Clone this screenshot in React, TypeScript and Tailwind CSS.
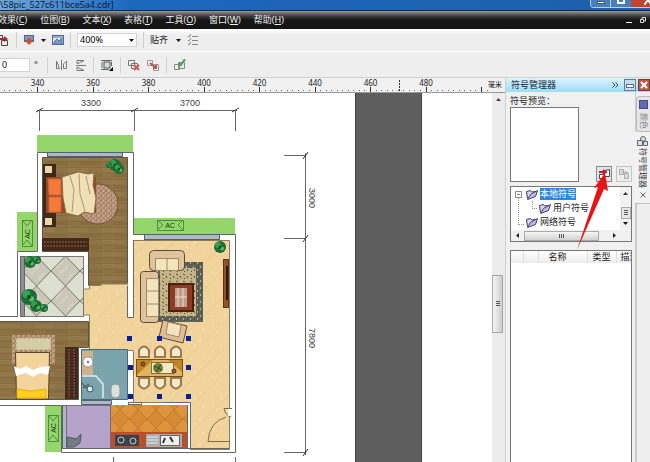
import React from 'react';

const MENUS = [
  ['效果', 'C'],
  ['位图', 'B'],
  ['文本', 'X'],
  ['表格', 'T'],
  ['工具', 'O'],
  ['窗口', 'W'],
  ['帮助', 'H'],
];

const RULER_LABELS = [340, 360, 380, 400, 420, 440, 460, 480];
const RULER_START = 37;
const RULER_STEP = 55.5;

const Separator = () => <span className="h-4 w-px shrink-0 bg-[#cfcfcf]" />;

const Caret = () => (
  <svg width="5" height="3" className="block shrink-0">
    <path d="M0 0H5L2.5 3Z" fill="#111" />
  </svg>
);

const IconButton = ({
  label,
  children,
}: {
  label: string;
  children: React.ReactNode;
}) => (
  <button type="button" aria-label={label} className="shrink-0">
    <svg width="12" height="12" fill="none" className="block">
      {children}
    </svg>
  </button>
);

const TitleBar = () => (
  <header className="flex h-[11px] shrink-0 items-start justify-between border-b border-[#12294a] bg-linear-to-r from-[#6fa6da] via-[#1a68bf] via-20% to-[#1f5fa8]">
    <h1 className="whitespace-nowrap font-['Open_Sans',sans-serif] text-[9px] leading-[10px] text-[#08172b]">
      \58pic_527c611bce5a4.cdr]
    </h1>
    <div className="flex h-2 overflow-hidden rounded-bl-sm border-b border-l border-[#b9d2ea]">
      <button
        type="button"
        aria-label="最小化"
        className="flex w-5 justify-center border-r border-[#b9d2ea] bg-[#4a7eb6]"
      >
        <span className="mt-px h-[3px] w-2 border border-[#47586b] bg-white" />
      </button>
      <button
        type="button"
        aria-label="还原"
        className="flex w-5 justify-center bg-[#4a7eb6]"
      >
        <span className="h-1 w-2 border-2 border-t-0 border-white" />
      </button>
      <button
        type="button"
        aria-label="关闭"
        className="flex w-[19px] justify-end bg-[#c14430]"
      >
        <svg width="6" height="5">
          <path d="M0 5L4 0M4 0L7 4" stroke="#fff" strokeWidth="2" />
        </svg>
      </button>
    </div>
  </header>
);

const MenuBar = () => (
  <nav className="flex h-[18px] shrink-0 items-center justify-between bg-linear-to-b from-[#9a9a9a] via-[#3a3a3a] via-30% to-[#151515] to-50%">
    <div className="-ml-[2px] flex gap-[13px]">
      {MENUS.map(([name, key]) => (
        <button
          key={key}
          type="button"
          className="whitespace-nowrap text-[9px] leading-3 text-[#f0f0f0]"
        >
          {name}(<u>{key}</u>)
        </button>
      ))}
    </div>
    <div className="flex items-center gap-2 pr-1">
      <button type="button" aria-label="最小化文档">
        <span className="mt-1 block h-px w-[6px] bg-white" />
      </button>
      <button type="button" aria-label="还原文档">
        <svg width="6" height="6" fill="none" className="block">
          <path d="M2 2V.5H5.5V4H4M.5 2.5H3.5V5.5H.5Z" stroke="#ddd" />
        </svg>
      </button>
    </div>
  </nav>
);

const StandardBar = () => (
  <div className="flex h-[23px] shrink-0 items-center gap-[6px] border-b border-white bg-linear-to-b from-white to-[#eee] to-30%">
    <div className="-ml-[2px]">
      <IconButton label="导出">
        <path d="M.5 1.5H4.5V5.5H.5M3.5 6.5H9.5V11.5H3.5Z" stroke="#444" />
        <path d="M0 4H6V2L10 5L6 8V6H0Z" fill="#b3202c" />
      </IconButton>
    </div>
    <Separator />
    <IconButton label="应用程序启动器">
      <rect x="1" y="1" width="10" height="7" fill="#47689c" />
      <rect x="2" y="2" width="8" height="4" fill="#7d9ac2" />
      <path d="M4 4H8V7H10L6 11L2 7H4Z" fill="#d65232" />
    </IconButton>
    <Caret />
    <IconButton label="欢迎屏幕">
      <rect x=".5" y="1.5" width="11" height="9" fill="#dbe4f1" stroke="#5a6680" />
      <path d="M1 3H11M2 8L5 5L7 7L10 4V10H2Z" stroke="#4e74b4" fill="#7a9bcc" />
    </IconButton>
    <Separator />
    <div className="relative flex h-[14px] w-[60px]">
      <select
        aria-label="缩放级别"
        defaultValue="400%"
        className="w-full appearance-none border border-[#d2d2d2] bg-white pl-[2px] text-[9px] leading-3 text-black"
      >
        <option>400%</option>
      </select>
      <span className="pointer-events-none absolute right-[3px] top-[6px]">
        <Caret />
      </span>
    </div>
    <Separator />
    <button type="button" className="flex items-center gap-2 text-[9px] leading-3">
      贴齐
      <Caret />
    </button>
    <IconButton label="选项">
      <path d="M5 2.5H11M5 6.5H11M5 10.5H11" stroke="#858585" />
      <path d="M1 2L2 3L4 0M1 6L2 7L4 4M1 10L2 11L4 8" stroke="#6c9278" />
    </IconButton>
  </div>
);

const PropertyBar = () => (
  <div className="flex h-[26px] shrink-0 items-center gap-[7px] border-b border-[#d0d0d0] bg-[#eee]">
    <label className="flex items-center gap-1 text-[9px] leading-3">
      <input
        aria-label="旋转角度"
        defaultValue="0"
        className="h-[14px] w-[30px] border border-l-0 border-[#d2d2d2] bg-white pl-[2px]"
      />
      <span className="w-[6px]">°</span>
    </label>
    <Separator />
    <IconButton label="水平镜像">
      <path d="M1.5 2V9.5H4.5ZM6.5 1V11M11.5 2V9.5H8.5V5Z" stroke="#777" />
    </IconButton>
    <IconButton label="垂直镜像">
      <path d="M3 1.5H10L4 4.5H3ZM2 6.5H12M3 11.5H10L4 8.5H3Z" stroke="#777" />
    </IconButton>
    <Separator />
    <IconButton label="文本换行">
      <rect x="3" y="3" width="6" height="6" fill="#d5dae4" stroke="#555" />
      <path d="M0 1.5H11M0 10.5H8M0 4H2M0 6H2M0 8H2M10.5 3V7" stroke="#666" />
      <path d="M12 8V12H8Z" fill="#000" />
    </IconButton>
    <Separator />
    <div className="flex gap-[7px]">
      <IconButton label="编辑符号">
        <path d="M.5 1.5H6.5V6.5H.5ZM3.5 4.5H9.5V9.5H3.5Z" stroke="#777" />
        <path d="M6 6L11 11M11 6L6 11" stroke="#cf5350" strokeWidth="2" />
      </IconButton>
      <IconButton label="断开链接">
        <path d="M.5 1.5H5.5V6.5H.5ZM6.5 5.5H11.5V11.5H6.5Z" stroke="#999" />
        <path d="M3 4L9 9M9 6V9H6" stroke="#bd5552" strokeWidth="2" />
      </IconButton>
    </div>
    <Separator />
    <IconButton label="还原为对象">
      <path d="M.5 5.5H5.5V10.5H.5ZM4.5 3.5H10.5V9.5H4.5Z" stroke="#888" />
      <path d="M5 4L7 6L11 0" stroke="#3da84a" strokeWidth="2" />
    </IconButton>
  </div>
);

const Ruler = () => (
  <div className="flex h-[15px] shrink-0 border-b border-[#999] bg-[#f1f1f1]">
    <svg className="h-full w-full" aria-label="标尺">
      {Array.from({ length: 88 }, (_, i) => {
        const x = Math.round(RULER_START + (i - 6) * (RULER_STEP / 10)) + 0.5;
        const major = (i - 6) % 10 === 0;
        return (
          <path
            key={i}
            d={`M${x} ${major ? 9 : 12}V${major ? 14 : 13}`}
            stroke={major ? '#333' : '#666'}
          />
        );
      })}
      {RULER_LABELS.map((n, i) => (
        <text
          key={n}
          x={RULER_START + 0.5 + i * RULER_STEP}
          y="8"
          textAnchor="middle"
          fontSize="8"
          fill="#222"
        >
          {n}
        </text>
      ))}
      <path d="M399.5 2V14" stroke="#333" strokeDasharray="2 1" />
      <text x="488" y="9" fontSize="7" fill="#111">
        毫米
      </text>
    </svg>
  </div>
);

const Plant = ({ x, y, r }: { x: number; y: number; r: number }) => (
  <g>
    <circle cx={x} cy={y} r={r} fill="#1e6b35" />
    <circle cx={x - r / 3} cy={y - r / 3} r={r / 2} fill="#35a04f" />
    <circle cx={x + r / 3} cy={y + r / 4} r={r / 3} fill="#57b964" />
    <circle cx={x} cy={y} r={r / 4} fill="#0d4824" />
  </g>
);

const Dimensions = () => (
  <g stroke="#666" fill="none">
    <path d="M37 110.5H237M39.5 110V131M134.5 110V131M235.5 110V131" />
    <path d="M36 112L43 108M131 112L138 108M232 112L239 108" stroke="#333" />
    <path d="M305.5 153V455M284 155.5H306M284 238.5H306M284 452.5H306" />
    <path d="M303 159L308 152M303 242L308 235M303 456L308 449" stroke="#333" />
    <path d="M113.5 457V480M235.5 457V480" />
    <g
      stroke="none"
      fill="#444"
      fontSize="9"
      textAnchor="middle"
      fontFamily="Liberation Sans, sans-serif"
    >
      <text x="91" y="106">3300</text>
      <text x="190" y="106">3700</text>
      <text transform="translate(309 198) rotate(90)">3000</text>
      <text transform="translate(309 338) rotate(90)">7800</text>
    </g>
  </g>
);

const Balconies = () => (
  <g>
    <g fill="#94d56c">
      <rect x="37" y="135" width="96" height="17" />
      <rect x="133" y="218" width="102" height="16" />
      <rect x="17" y="212" width="20" height="39" />
      <rect x="45" y="405" width="16" height="47" />
    </g>
    <g fill="none" stroke="#4d8f3c">
      <path d="M157.5 220.5H183.5V230.5H157.5ZM157 220L163 225L157 230M183 220L178 225L183 230" />
      <path d="M22.5 220.5H32.5V246.5H22.5ZM22 220L27 226L32 220M22 246L27 240L32 246" />
      <path d="M48.5 415.5H58.5V441.5H48.5ZM48 415L53 421L58 415M48 441L53 435L58 441" />
    </g>
    <g
      fill="#163c12"
      fontSize="7"
      textAnchor="middle"
      fontFamily="Liberation Sans, sans-serif"
    >
      <text x="170" y="228">AC</text>
      <text transform="translate(30 234) rotate(-90)">AC</text>
      <text transform="translate(56 428) rotate(-90)">AC</text>
    </g>
  </g>
);

const Rooms = () => (
  <g>
    {/* outer walls */}
    <path
      d="M37.5 152.5H133.5V234.5H235.5V452.5H61.5V405.5H-2V316.5H17.5V251.5H37.5Z"
      fill="#fff"
      stroke="#666"
    />
    {/* bedroom, hall and living room floors */}
    <path d="M42.5 157.5H127.5V285.5H88.5V251.5H42.5Z" fill="url(#wood)" stroke="#5d5442" />
    <path
      d="M89.5 285.5H101V284H127.5V316.5H133.5V240.5H229.5V449.5H190.5V402.5H133.5V350.5H89.5V315H83.5V289H89.5Z"
      fill="url(#sand)"
      stroke="#8d7c5c"
    />
    <path d="M127.5 286V317.5H133.5V240" fill="#fff" stroke="#666" />
    <path d="M-2 321.5H88.5V347.5H78.5V399.5H-2Z" fill="url(#wood)" stroke="#5d5442" />
    <rect x="24.5" y="256.5" width="59" height="60" fill="url(#tile)" stroke="#777" />
    <rect x="20.5" y="256.5" width="4" height="60" fill="#8b8f97" stroke="#666" />
    <path d="M81.5 349.5H127.5V399.5H81.5Z" fill="#7ba3ad" stroke="#4d6a73" />
    {/* windows */}
    <g fill="#a9b9c8" stroke="#56616e">
      <rect x="47.5" y="152.5" width="75" height="4" />
      <rect x="144.5" y="234.5" width="75" height="5" />
      <rect x="62.5" y="405.5" width="4" height="43" />
      <path d="M81.5 400.5H111.5V404.5H81.5Z" />
    </g>
    <rect x="66.5" y="405.5" width="44" height="43" fill="#b5a3ca" stroke="#776b88" />
    {/* kitchen */}
    <rect x="111" y="405" width="76" height="28" fill="url(#kitchen)" />
    <path d="M111 432H187V449H111Z" fill="#b8502c" />
    <path d="M128.5 405V402.5H141.5V404.5H128M163 402.5H190.5V449M187.5 405V449" stroke="#666" fill="none" />
    <path d="M61 448.5H229" stroke="#666" />
    {/* entrance door */}
    <path d="M229 441.5H208Q209 422 226 417M232 408.5H224Q225 415 231 417" fill="none" stroke="#7c6c50" />
    <path d="M228 409H233V416H228Z" fill="#fff" />
  </g>
);

const BedroomFurniture = () => (
  <g>
    <rect x="42" y="238" width="47" height="13" fill="#44291a" />
    <path d="M44 242H87M44 246H87" stroke="#694430" strokeWidth="2" strokeDasharray="2 1" />
    <circle cx="98" cy="204" r="20" fill="url(#weave)" stroke="#764e40" />
    <rect x="43" y="164" width="13" height="63" fill="#3f281c" />
    <rect x="45" y="166" width="7" height="7" fill="#e9d7ac" />
    <rect x="45" y="218" width="7" height="7" fill="#e9d7ac" />
    <rect x="46" y="177" width="50" height="36" fill="#8b4d2b" />
    <path d="M48 179H61V195H49ZM49 197H61V212H49Z" fill="#f47a3b" stroke="#d9622e" />
    <path
      d="M62 177L72 174L78 172L88 174L94 173L93 185L96 198L94 214L84 212L78 216L66 213L63 198Z"
      fill="#efe0b8"
      stroke="#89704b"
    />
    <path d="M70 176L74 190L72 212M79 174L80 194L85 211M86 176L90 194" fill="none" stroke="#ad966d" />
    <Plant x={115} y={165} r={6} />
    <Plant x={119} y={169} r={5} />
    <Plant x={109} y={165} r={3} />
    <Plant x={30} y={262} r={6} />
    <Plant x={37} y={260} r={4} />
    <Plant x={29} y={297} r={8} />
    <Plant x={36} y={306} r={6} />
    <Plant x={44} y={308} r={4} />

    {/* second bedroom */}
    <rect x="12" y="335" width="43" height="29" fill="url(#weave)" />
    <rect x="16" y="338" width="35" height="12" fill="#d6cda6" stroke="#a8946c" strokeDasharray="2 2" />
    <path d="M15.500 352.500H49.500L48.500 399H16.500Z" fill="#f1d59c" stroke="#564632" />
    <path d="M14 366L20 369L26 366L33 370L40 367L50 366L48 375L40 373L33 377L26 373L16 376Z" fill="#fff" />
    <path d="M17 389L31 391L46 389V398H17Z" fill="#fed21c" stroke="#f0a816" />
    <rect x="65" y="347" width="13" height="52" fill="#442a1e" />
    <path d="M69 349V398M74 349V398" stroke="#694430" strokeWidth="2" strokeDasharray="2 1" />

    {/* bathroom */}
    <rect x="82" y="351" width="11" height="24" fill="#d0b28a" />
    <circle cx="88" cy="362" r="5" fill="#fff" stroke="#999" />
    <circle cx="88" cy="362" r="1" fill="#444" />
    <path d="M82 376H96L103 384V398" fill="none" stroke="#c7dadd" strokeWidth="2" />
    <path d="M82 383L90 392M83 388L89 384" stroke="#31454c" />
    <circle cx="90" cy="389" r="3" fill="#e1eaeb" stroke="#3c535a" />
    <rect x="111" y="384" width="9" height="14" rx="4" fill="#dde0dc" stroke="#8a9494" />
    <path d="M67 437L76 439L81 434L80 443L74 447H67Z" fill="#747c84" stroke="#4f575f" />
  </g>
);

const LivingFurniture = () => (
  <g>
    <rect x="158" y="262" width="45" height="60" fill="#5d625b" />
    <rect x="158" y="262" width="45" height="60" fill="url(#speckle)" />
    <rect x="160" y="268" width="36" height="48" fill="#c7b588" />
    <rect x="160" y="268" width="36" height="48" fill="url(#speckle)" />
    <rect x="149.500" y="250.500" width="35" height="20" rx="4" fill="#dfc39c" stroke="#5d4a39" />
    <path d="M155.500 258.500H178.500V270.500H155.500ZM167 258V270" fill="#f4e4be" stroke="#a48761" />
    <rect x="140.500" y="271.500" width="18" height="51" rx="3" fill="#dfc39c" stroke="#5d4a39" />
    <path d="M146.500 278.500H158.500V316.500H146.500ZM146 291H158M146 304H158" fill="#f4e4be" stroke="#a48761" />
    <rect x="169" y="284" width="24" height="27" fill="#8b3c22" stroke="#4a2013" strokeWidth="2" />
    <rect x="175" y="288" width="12" height="19" fill="#c09b8a" />
    <path d="M178 288V307M183 288V307M175 297H187" stroke="#ebd9cd" />
    <path d="M163 320L187 326L183 343L159 337Z" fill="#dfbd97" stroke="#5d4a39" />
    <path d="M168 322L181 325L179 337L166 334Z" fill="#f4e4be" stroke="#a48761" />
    <rect x="223.500" y="259.500" width="5" height="48" fill="#95512a" stroke="#5f3219" />
    <path d="M227 266V300" stroke="#27170f" strokeWidth="2" />
    <Plant x={220} y={247} r={6} />

    {/* dining set */}
    {[144, 160, 176].map((x) => (
      <g key={x} fill="#f4e8cd" stroke="#9a7a48" strokeWidth="2">
        <path d={`M${x - 5} 357V350Q${x} 343 ${x + 5} 350V357Z`} />
        <path d={`M${x - 5} 378V385Q${x} 392 ${x + 5} 385V378Z`} />
      </g>
    ))}
    <rect x="136.500" y="359.500" width="46" height="17" fill="#bf8426" stroke="#785016" />
    <path d="M137 375L153 360H168L182 372V376H137Z" fill="#e2b461" />
    <rect x="151.500" y="362.500" width="22" height="11" fill="#f4e9c5" stroke="#8a6d35" />
    <circle cx="158" cy="368" r="5" fill="#6e8736" />
    <path d="M154 366L162 370M161 364L156 372" stroke="#313f18" />
    <circle cx="143" cy="364" r="2" fill="#8d5d39" stroke="#543018" />
    <circle cx="174" cy="371" r="2" fill="#8d5d39" stroke="#543018" />

    {/* stove and sink */}
    <rect x="115" y="435" width="24" height="11" fill="#3c4249" />
    <circle cx="121" cy="440" r="3" fill="none" stroke="#c5cacf" />
    <circle cx="133" cy="441" r="3" fill="none" stroke="#c5cacf" />
    <rect x="146" y="434" width="36" height="13" fill="#a9adb0" />
    <path d="M147 437H158M147 440H158M147 443H158" stroke="#eee" />
    <rect x="160.500" y="435.500" width="19" height="10" fill="#eee" stroke="#666" />
    <path d="M163 443L165 438M170 437L173 442" stroke="#333" strokeWidth="2" />
  </g>
);

const HANDLES = [
  [129, 338], [159, 338], [188, 338],
  [130, 367], [188, 367],
  [130, 396], [159, 396], [188, 396],
];

const FloorPlan = () => (
  <svg className="absolute inset-0 h-full w-full" aria-label="户型图">
    <defs>
      <pattern id="wood" width="34" height="12" patternUnits="userSpaceOnUse">
        <rect width="34" height="12" fill="#8d7345" />
        <rect width="20" height="4" fill="#947a4b" />
        <rect x="12" y="6" width="22" height="3" fill="#866c3e" />
        <path d="M0 5.500H34M0 11.500H34" stroke="#7f663b" strokeWidth=".5" />
      </pattern>
      <pattern id="sand" width="26" height="26" patternUnits="userSpaceOnUse">
        <rect width="26" height="26" fill="#f1d49b" />
        <path d="M0 26L26 0" stroke="#e6c88b" strokeWidth=".7" />
        <path d="M3 4h2M12 8h2M20 17h3M8 20h2M17 3h2M4 13h2" stroke="#f5dca9" strokeWidth="2" />
      </pattern>
      <pattern id="tile" width="29" height="30" x="22" y="256" patternUnits="userSpaceOnUse">
        <rect width="29" height="30" fill="#dde0d0" />
        <path d="M14.500 0L29 15L14.500 30L0 15Z" fill="#cbc8b7" stroke="#777c73" />
        <path d="M5 12L12 5M16 24L22 17M9 18L17 10" stroke="#d5d2c3" strokeWidth="2" />
      </pattern>
      <pattern id="kitchen" width="18" height="18" x="111" y="410" patternUnits="userSpaceOnUse">
        <rect width="18" height="18" fill="#de943c" />
        <path d="M9 0L18 9L9 18L0 9Z" fill="#d68a35" stroke="#c47a2c" />
      </pattern>
      <pattern id="weave" width="5" height="5" patternUnits="userSpaceOnUse">
        <rect width="5" height="5" fill="#b99879" />
        <path d="M0 1h2M3 3h2M1 4h1" stroke="#94685a" />
        <path d="M3 1h1M0 3h1" stroke="#dcc4a4" />
      </pattern>
      <pattern id="speckle" width="7" height="7" patternUnits="userSpaceOnUse">
        <path d="M1 1L3 2M5 3L6 5M2 5L3 6" stroke="#494d42" />
        <path d="M4 1h1M1 4h1" stroke="#bdb08c" strokeWidth="2" />
      </pattern>
    </defs>
    <rect x="355" width="66" height="100%" fill="#5e5e5e" />
    <path d="M355.500 0V2000M421.500 0V2000" stroke="#444" />
    <g transform="translate(0 -93)">
      <Dimensions />
      <Balconies />
      <Rooms />
      <BedroomFurniture />
      <LivingFurniture />
      {HANDLES.map(([x, y]) => (
        <rect key={`${x}-${y}`} x={x - 2} y={y - 2} width="5" height="5" fill="#0b1d99" />
      ))}
    </g>
  </svg>
);

const CanvasScrollbar = () => (
  <div className="flex w-[13px] shrink-0 flex-col bg-[#ececec]">
    <button
      type="button"
      aria-label="向上滚动"
      className="flex h-3 items-center justify-center"
    >
      <svg width="5" height="3">
        <path d="M0 3L2.500 0L5 3Z" fill="#444" />
      </svg>
    </button>
    <div className="mt-[170px] flex h-[58px] w-[11px] items-center justify-center border border-[#a5a5a5] bg-linear-to-r from-[#f6f6f6] to-[#cecece]">
      <svg width="4" height="6">
        <path d="M0 .5H4M0 2.500H4M0 4.500H4" stroke="#555" />
      </svg>
    </div>
  </div>
);

const Folder = () => (
  <svg width="12" height="11" className="shrink-0" stroke="#403c72">
    <path d="M1.500 9.500L.5 2.500L4.500 1.500L5.500 3L9.500 2.500V5" fill="#d9d8f3" />
    <path d="M1.500 10.500L4.500 5.500L11.500 1.500L9.500 7.500Z" fill="#c0bee8" />
  </svg>
);

const SymbolTree = () => (
  <div className="flex h-[56px] flex-col border border-[#777] bg-white">
    <div className="flex min-h-0 flex-1">
      <ul className="flex-1 text-[9px] leading-[14px]">
        <li>
          <div className="flex h-[14px] items-center gap-[2px] pl-1">
            <button type="button" aria-label="折叠" className="mr-[2px]">
              <svg width="7" height="7" fill="#fff" className="block">
                <path d="M.5.5H6.500V6.500H.5ZM2 3.500H5" stroke="#888" />
              </svg>
            </button>
            <Folder />
            <span className="bg-[#2f88dc] leading-3 text-white">本地符号</span>
          </div>
          <ul className="ml-[21px]">
            <li className="flex h-[14px] items-center gap-[2px]">
              <span className="mb-[6px] h-2 w-[5px] border-b border-l border-dotted border-[#999]" />
              <Folder />
              用户符号
            </li>
          </ul>
        </li>
        <li className="flex h-[14px] items-center gap-[2px] pl-[7px]">
          <span className="-mt-[22px] h-7 w-[6px] border-b border-l border-dotted border-[#999]" />
          <Folder />
          网络符号
        </li>
      </ul>
      <div className="flex w-[11px] flex-col items-center justify-between bg-[#f2f2f2] py-[5px]">
        <svg width="5" height="3">
          <path d="M0 3L2.500 0L5 3Z" fill="#333" />
        </svg>
        <svg width="10" height="12" className="mt-2">
          <rect x=".5" y=".5" width="9" height="11" fill="#e6e6e6" stroke="#aaa" />
          <path d="M3 3.500H7M3 5.500H7M3 7.500H7" stroke="#555" />
        </svg>
        <Caret />
      </div>
    </div>
    <div className="flex h-[11px] items-center bg-[#f0f0f0] pl-[5px]">
      <svg width="3" height="5">
        <path d="M3 0L0 2.500L3 5Z" fill="#222" />
      </svg>
      <div className="ml-[5px] flex h-[10px] w-[75px] items-center justify-center border border-[#aaa] bg-linear-to-b from-[#f6f6f6] to-[#d2d2d2]">
        <svg width="6" height="4">
          <path d="M.5 0V4M2.500 0V4M4.500 0V4" stroke="#555" />
        </svg>
      </div>
      <svg width="3" height="5" className="ml-[14px]">
        <path d="M0 0L3 2.500L0 5Z" fill="#222" />
      </svg>
    </div>
  </div>
);

const SymbolList = () => (
  <div className="flex-1 overflow-hidden border border-b-0 border-[#777] bg-white">
    <table className="w-[136px] table-fixed text-[9px] leading-3">
      <thead>
        <tr className="h-3 bg-linear-to-b from-white to-[#ececec]">
          <th aria-label="状态" className="w-3 border-r border-[#ddd]" />
          <th aria-label="链接" className="w-[15px] border-r border-[#ddd]" />
          <th className="w-[49px] border-r border-[#ddd] p-0 pl-[10px] text-left font-normal">
            名称
          </th>
          <th className="w-[29px] border-r border-[#ddd] p-0 text-center font-normal">
            类型
          </th>
          <th className="p-0 pl-1 text-left font-normal">描述</th>
        </tr>
      </thead>
      <tbody />
    </table>
  </div>
);

const DockerTabs = () => (
  <div className="flex w-[14px] shrink-0 flex-col pt-1 text-[8px] leading-[10px] text-[#333]">
    <button
      type="button"
      className="flex h-9 flex-col items-center gap-1 rounded-l-sm border border-r-0 border-[#bbb] bg-[#e6e6e6] pt-[3px] text-[#888]"
    >
      <span className="h-[9px] w-[9px] shrink-0 border border-[#4a4a88] bg-[#6468ae]" />
      <span className="[text-orientation:sideways] [writing-mode:vertical-rl]">颜色</span>
    </button>
    <div className="-ml-px flex h-[72px] flex-col items-center border-b border-[#c4c4c4] bg-[#f2f2f2] pt-1">
      <button type="button" className="flex flex-col items-center gap-[2px]">
        <svg width="11" height="10" fill="#dedff0" stroke="#666" className="shrink-0">
          <circle cx="6" cy="3" r="2.500" />
          <path d="M.5 4.500H5.500V9.500H.5ZM6.500 5.500H10.500V9.500H6.500Z" />
        </svg>
        <span className="[text-orientation:sideways] [writing-mode:vertical-rl]">
          符号管理器
        </span>
      </button>
      <button type="button" aria-label="关闭标签" className="mt-1">
        <svg width="6" height="6" className="block">
          <path d="M.5.5L5.500 5.500M5.500.5L.5 5.500" stroke="#666" />
        </svg>
      </button>
    </div>
    <div className="flex-1 border-l border-[#c8c8c8] bg-[#eee]" />
  </div>
);

const SymbolDocker = () => (
  <aside className="relative flex w-[145px] shrink-0 flex-col border-l border-[#cfcfcf] bg-[#f0f0f0]">
    <div className="flex h-[14px] shrink-0 items-center bg-linear-to-b from-[#dcf3fd] to-[#9bdcf6]">
      <h2 className="flex-1 pl-[5px] text-[9px] leading-3 text-[#123]">符号管理器</h2>
      <button type="button" aria-label="更多" className="mr-[5px]">
        <svg width="7" height="6" fill="none" className="block">
          <path d="M.5.5L3 3L.5 5.500M3.500.5L6 3L3.500 5.500" stroke="#345" />
        </svg>
      </button>
      <button
        type="button"
        aria-label="最小化泊坞窗"
        className="flex h-3 w-3 items-center justify-center border border-[#5c7aa3] bg-[#c9def2]"
      >
        <span className="mt-[2px] h-1 w-2 border border-[#566d8c] bg-white" />
      </button>
      <button
        type="button"
        aria-label="关闭泊坞窗"
        className="ml-[2px] flex h-3 w-3 items-center justify-center border border-[#733c36] bg-[#bd5a4d]"
      >
        <svg width="8" height="8">
          <path d="M1 1L7 7M7 1L1 7" stroke="#fff" strokeWidth="2" />
        </svg>
      </button>
    </div>
    <div className="flex flex-1">
      <div className="flex min-w-0 flex-1 flex-col border-r border-[#ccc] pl-1 pr-[3px] pt-[3px]">
        <h3 className="text-[9px] leading-3">符号预览：</h3>
        <div className="mb-1 flex items-end justify-between">
          <div className="h-[75px] w-[69px] border border-[#777] bg-white" />
          <div className="flex gap-1">
            <button
              type="button"
              aria-label="插入符号"
              className="flex h-4 w-4 items-center justify-center border border-[#8a8a8a] bg-[#e4e4e4]"
            >
              <svg width="12" height="12" fill="#fff" stroke="#445">
                <path d="M6.500 2.500L11.500 1.500V8.500H6.500ZM1.500 6.500H6.500V10.500H1.500Z" />
                <path d="M1 4H7M5 2L8 4L5 6" stroke="#b22230" fill="none" strokeWidth="2" />
              </svg>
            </button>
            <button
              type="button"
              disabled
              aria-label="导出库"
              className="flex h-4 w-4 items-center justify-center border border-[#c5c5c5] bg-[#eee]"
            >
              <svg width="12" height="12" fill="#ddd" stroke="#aaa">
                <path d="M1.500 1.500H5.500V6.500H1.500ZM6.500 5.500H10.500V10.500H6.500ZM4 4H9V6" />
              </svg>
            </button>
          </div>
        </div>
        <SymbolTree />
        <div className="h-2 shrink-0" />
        <SymbolList />
      </div>
      <DockerTabs />
    </div>
    {/* pointer to the insert button */}
    <svg
      width="34"
      height="80"
      className="pointer-events-none absolute left-[71px] top-[93px]"
    >
      <path d="M28 2L17 17L21 16L0 79L27 18L31 20Z" fill="#e81313" />
    </svg>
  </aside>
);

const App = () => {
  return (
    <div className="flex h-screen flex-col overflow-hidden bg-[#eee] font-['Noto_Sans','Noto_Sans_CJK_SC',sans-serif] text-[#222]">
      <TitleBar />
      <MenuBar />
      <StandardBar />
      <PropertyBar />
      <div className="flex min-h-0 flex-1">
        <main className="flex min-w-0 flex-1 flex-col">
          <Ruler />
          <div className="flex min-h-0 flex-1">
            <div className="relative flex-1 overflow-hidden bg-white">
              <FloorPlan />
            </div>
            <CanvasScrollbar />
          </div>
        </main>
        <SymbolDocker />
      </div>
    </div>
  );
};

export default App;
